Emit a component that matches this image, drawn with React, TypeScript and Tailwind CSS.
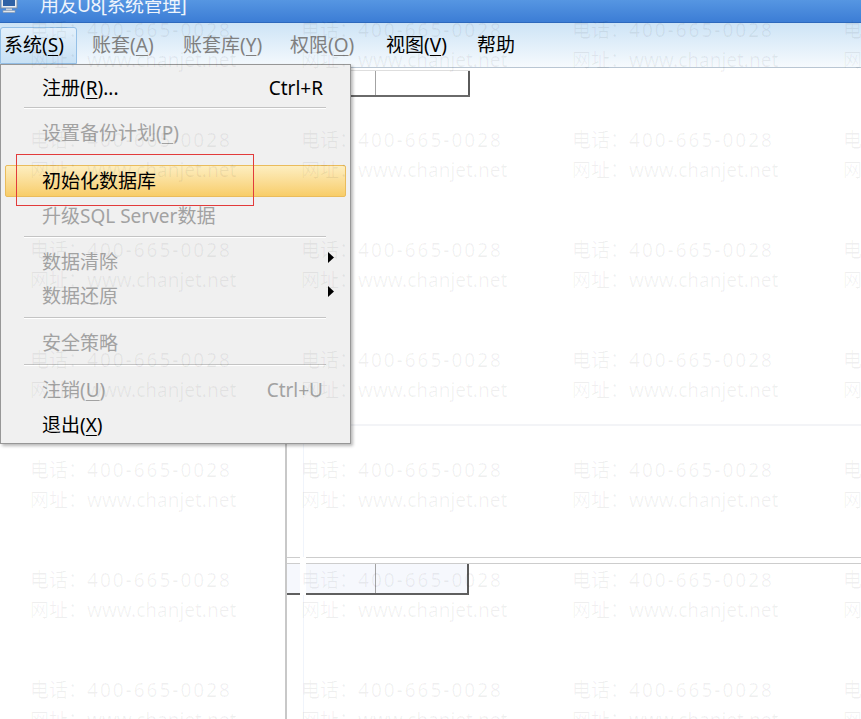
import React from "react";
import clsx from "clsx";

const Acc = ({ text, k, tail = "" }: { text: string; k?: string; tail?: string }) => (
  <span>
    {text}
    {k && (
      <>
        (<span className="underline underline-offset-[3px] decoration-1">{k}</span>)
      </>
    )}
    {tail}
  </span>
);

const Sep = ({ h }: { h: string }) => (
  <div className={clsx("flex items-center pl-[23px] pr-[24px]", h)}>
    <div className="h-[2px] w-full border-t border-[#c4c4c4] bg-white" />
  </div>
);

const Arrow = () => (
  <svg width="7" height="11" viewBox="0 0 7 11" className="mb-[10px]">
    <path d="M0 0 L6 5.5 L0 11 Z" fill="#000" />
  </svg>
);

const Item = ({
  children,
  disabled,
  right,
  arrow,
  className,
}: {
  children: React.ReactNode;
  disabled?: boolean;
  right?: string;
  arrow?: boolean;
  className?: string;
}) => (
  <div
    className={clsx(
      "flex h-[34px] items-center pl-[41px]",
      arrow ? "pr-[15px]" : "pr-[27px]",
      disabled ? "text-[#a2a2a2]" : "text-black",
      className
    )}
  >
    <span className="flex-1">{children}</span>
    {right && <span>{right}</span>}
    {arrow && <Arrow />}
  </div>
);

const Watermark = () => {
  const cells = Array.from({ length: 28 });
  return (
    <div className="pointer-events-none absolute inset-0 z-30 grid grid-cols-[repeat(4,271px)] auto-rows-[110px] pl-[30px] pt-[15px]">
      {cells.map((_, i) => (
        <div key={i} className="whitespace-nowrap text-[19px] leading-[30px] text-black/[0.06]">
          <div>
            电话：<span className="tracking-[2px]">400-665-0028</span>
          </div>
          <div>网址：www.chanjet.net</div>
        </div>
      ))}
    </div>
  );
};

export default function App() {
  return (
    <div className="relative h-[719px] w-[861px] overflow-hidden bg-white font-['Noto_Sans','Noto_Sans_CJK_SC',sans-serif]">
      {/* title bar */}
      <div className="flex h-[23px] items-start overflow-hidden border-b border-[#2d69bd] bg-linear-to-b from-[#5696e2] to-[#3c7dd5]">
        <svg width="18" height="13" viewBox="0 0 18 13" className="shrink-0">
          <rect x="1" y="-6" width="16" height="14" fill="#e9eef4" stroke="#7d8ea4" />
          <rect x="3" y="-4" width="12" height="10" fill="#2f62a6" />
          <rect x="6" y="8.5" width="6" height="2" fill="#c8d0da" />
          <rect x="3" y="10.5" width="12" height="2" fill="#e2e7ed" stroke="#8a98aa" strokeWidth="0.6" />
        </svg>
        <span className="-mt-[7px] ml-[22px] text-[19px] leading-[24px] tracking-[-0.5px] text-[#eef4fc]">用友U8[系统管理]</span>
      </div>

      {/* menu bar */}
      <div className="flex h-[45px] items-center border-b border-[#b9c6d3] bg-linear-to-b from-[#cde4f6] to-[#f6fafd] text-[19px]">
        <div className="flex h-full w-[92px] items-end pb-[3px]">
          <div className="flex h-[37px] w-[77px] items-center rounded-t-[3px] border border-[#95c0e7] bg-linear-to-b from-[#e3f0fb] to-[#c8e1f5] pl-[3px] text-black">
            <Acc text="系统" k="S" />
          </div>
        </div>
        <div className="w-[91px] text-[#808080]">
          <Acc text="账套" k="A" />
        </div>
        <div className="w-[107px] text-[#808080]">
          <Acc text="账套库" k="Y" />
        </div>
        <div className="w-[96px] text-[#808080]">
          <Acc text="权限" k="O" />
        </div>
        <div className="w-[91px] text-black">
          <Acc text="视图" k="V" />
        </div>
        <div className="text-black">帮助</div>
      </div>

      {/* body */}
      <div className="flex h-[651px]">
        <div className="w-[287px] shrink-0 border-r-2 border-[#c8c8c8]" />
        <div className="flex flex-1 flex-col">
          <div className="mt-[2px] flex h-[27px] w-fit border-t border-b-2 border-t-[#dedede] border-b-[#6a6a6a]">
            <div className="w-[89px] border-r border-[#a3a3a3]" />
            <div className="w-[94px] border-r-2 border-[#5a5a5a]" />
          </div>
          <div className="h-[460px] pl-[16px]">
            <div className="h-full border-l border-[#f0f4fb]">
              <div className="h-[327px]" />
              <div className="border-t-2 border-[#f3f4f7]" />
            </div>
          </div>
          <div className="flex h-[7px] gap-[6px]">
            <div className="w-[13px] border-y border-[#cdcdcd]" />
            <div className="flex-1 border-y border-[#cdcdcd]" />
          </div>
          <div className="flex h-[31px] gap-[6px]">
            <div className="w-[13px] border-b-2 border-[#5f5f5f] bg-[#f6f8fd]" />
            <div className="flex w-fit border-b-2 border-[#5f5f5f] bg-[#f6f8fd]">
              <div className="w-[70px] border-r border-[#a3a3a3]" />
              <div className="w-[93px] border-r-2 border-[#5a5a5a]" />
            </div>
          </div>
          <div className="flex-1 pl-[16px]">
            <div className="h-full border-l border-[#f0f4fb]" />
          </div>
        </div>
      </div>

      {/* dropdown menu */}
      <div className="absolute left-0 top-[64px] z-20 h-[380px] w-[351px] border border-[#979797] bg-[#f0f0f0] pt-[6px] text-[19px] shadow-[2px_2px_3px_rgba(0,0,0,0.28)]">
        <Item right="Ctrl+R">
          <Acc text="注册" k="R" tail="..." />
        </Item>
        <Sep h="h-[6px]" />
        <Item disabled className="mt-[5px]">
          <Acc text="设置备份计划" k="P" />
        </Item>
        <div className="mx-[4px] mt-[15px] flex h-[32px] items-center rounded-[2px] border border-[#eabc5c] bg-linear-to-b from-[#fdeec0] to-[#f8cd68] pl-[36px] text-black">
          初始化数据库
        </div>
        <Item disabled className="mt-[2px]">
          升级SQL Server数据
        </Item>
        <Sep h="h-[8px]" />
        <Item disabled arrow className="mt-[4px]">
          数据清除
        </Item>
        <Item disabled arrow>
          数据还原
        </Item>
        <Sep h="h-[10px]" />
        <Item disabled className="mt-[3px]">
          安全策略
        </Item>
        <Sep h="h-[10px]" />
        <Item disabled right="Ctrl+U" className="mt-[3px]">
          <Acc text="注销" k="U" />
        </Item>
        <Item className="mt-[1px]">
          <Acc text="退出" k="X" />
        </Item>

        {/* annotation box */}
        <div className="absolute left-[15px] top-[89px] z-40 h-[52px] w-[238px] border-[1.5px] border-[#e23b3b]" />
      </div>

      <Watermark />
    </div>
  );
}
